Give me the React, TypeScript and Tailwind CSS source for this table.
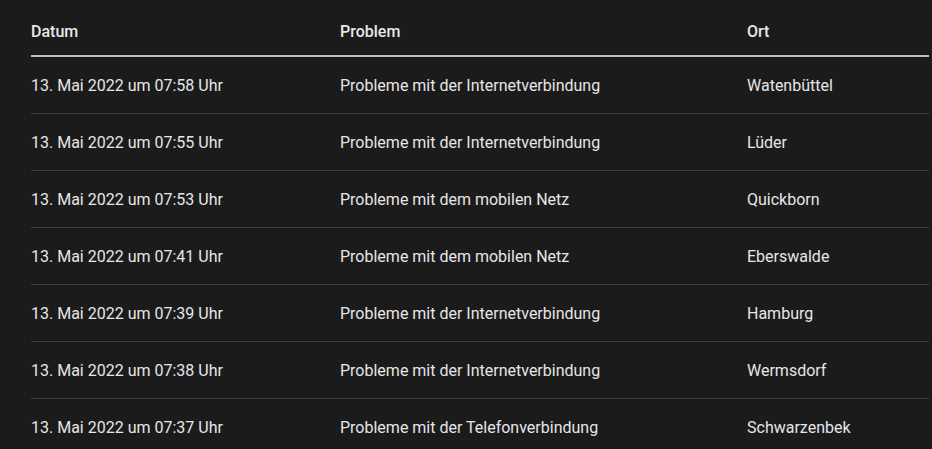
import * as React from 'react';

const rows = [
  ['13. Mai 2022 um 07:58 Uhr', 'Probleme mit der Internetverbindung', 'Watenbüttel'],
  ['13. Mai 2022 um 07:55 Uhr', 'Probleme mit der Internetverbindung', 'Lüder'],
  ['13. Mai 2022 um 07:53 Uhr', 'Probleme mit dem mobilen Netz', 'Quickborn'],
  ['13. Mai 2022 um 07:41 Uhr', 'Probleme mit dem mobilen Netz', 'Eberswalde'],
  ['13. Mai 2022 um 07:39 Uhr', 'Probleme mit der Internetverbindung', 'Hamburg'],
  ['13. Mai 2022 um 07:38 Uhr', 'Probleme mit der Internetverbindung', 'Wermsdorf'],
  ['13. Mai 2022 um 07:37 Uhr', 'Probleme mit der Telefonverbindung', 'Schwarzenbek'],
];

export default function App() {
  return (
    <div className="min-h-[449px] w-full overflow-hidden bg-[#1b1b1b] pl-[31px] pr-[3px] font-['Roboto',sans-serif]">
      <div className="flex h-[57px] items-center border-b-2 border-[#bdbdbd] pt-[9px] text-[16px] font-medium text-[#e8e8e8]">
        <div className="w-[309px] shrink-0">Datum</div>
        <div className="w-[407px] shrink-0">Problem</div>
        <div className="flex-1">Ort</div>
      </div>
      {rows.map((r, i) => (
        <div
          key={i}
          className="flex h-[57px] items-center border-b border-[#3d3d3d] pt-[2px] text-[16px] text-[#e6e6e6]"
        >
          <div className="w-[309px] shrink-0">{r[0]}</div>
          <div className="w-[407px] shrink-0">{r[1]}</div>
          <div className="flex-1">{r[2]}</div>
        </div>
      ))}
    </div>
  );
}
